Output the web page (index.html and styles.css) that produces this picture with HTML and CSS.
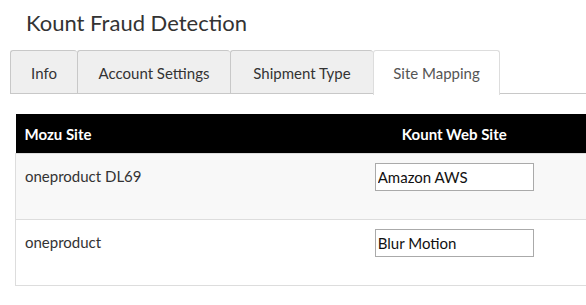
FILE: index.html
```html
<!DOCTYPE html>
<html lang="en">
<head>
    <meta charset="UTF-8">
    <title>Kount Fraud Detection</title>
    <link rel="stylesheet" href="styles.css">
</head>
<body>
    <h1 class="page-title">Kount Fraud Detection</h1>

    <div class="tabs">
        <div class="tab tab-info">Info</div>
        <div class="tab tab-account">Account Settings</div>
        <div class="tab tab-shipment">Shipment Type</div>
        <div class="tab tab-site active">Site Mapping</div>
        <div class="tabs-rest"></div>
    </div>

    <table class="mapping-table">
        <thead>
            <tr>
                <th class="col-mozu">Mozu Site</th>
                <th class="col-kount">Kount Web Site</th>
            </tr>
        </thead>
        <tbody>
            <tr class="odd">
                <td class="col-mozu">oneproduct DL69</td>
                <td class="col-kount"><input class="site-input" type="text" value="Amazon AWS"></td>
            </tr>
            <tr>
                <td class="col-mozu">oneproduct</td>
                <td class="col-kount"><input class="site-input" type="text" value="Blur Motion"></td>
            </tr>
        </tbody>
    </table>
</body>
</html>
```

FILE: styles.css
```css
body {
    margin: 0;
    background-color: #fff;
    font-family: "Source Sans Pro", Lato, "Liberation Sans", sans-serif;
    color: #333;
}
.page-title {
    margin: 0;
    padding: 9px 0 0 26px;
    height: 50px;
    box-sizing: border-box;
    font-size: 22px;
    font-weight: 400;
    line-height: 28px;
    color: #333;
}
.tabs {
    display: flex;
    margin-left: 10px;
    height: 44px;
}
.tab {
    box-sizing: border-box;
    height: 44px;
    border: 1px solid #c8c8c8;
    border-right: none;
    border-radius: 3px 3px 0 0;
    background-color: #efefef;
    font-size: 15px;
    line-height: 44px;
    text-align: center;
    color: #333;
}
.tab-info { width: 67px; }
.tab-account { width: 153px; }
.tab-shipment { width: 143px; }
.tab-site { width: 127px; }
.tab.active {
    background-color: #fff;
    border: 1px solid #ddd;
    border-bottom: none;
    height: 45px;
    color: #555;
}
.tabs-rest {
    flex: 1;
    border-bottom: 1px solid #c8c8c8;
}
.mapping-table {
    margin: 20px 0 0 15px;
    width: 571px;
    border-collapse: collapse;
    table-layout: fixed;
    font-size: 15px;
}
.mapping-table th {
    background-color: #000;
    color: #fff;
    font-weight: 700;
    height: 39px;
    padding: 0 9px;
    border-bottom: 1px solid #ddd;
}
.mapping-table th.col-mozu {
    text-align: left;
}
.col-mozu { width: 289px; }
.mapping-table td {
    height: 66px;
    box-sizing: border-box;
    padding: 9px 9px;
    vertical-align: top;
    border-bottom: 1px solid #ddd;
    line-height: 26px;
}
.mapping-table td.col-mozu {
    border-left: 1px solid #ddd;
}
.mapping-table td.col-kount {
    text-align: center;
}
.mapping-table tr.odd td {
    background-color: #f8f8f8;
}
.site-input {
    box-sizing: border-box;
    width: 159px;
    height: 28px;
    border: 1px solid #aaa;
    padding: 0 2px;
    font-family: inherit;
    font-size: 15px;
    color: #111;
    background-color: #fff;
    vertical-align: top;
}
```
